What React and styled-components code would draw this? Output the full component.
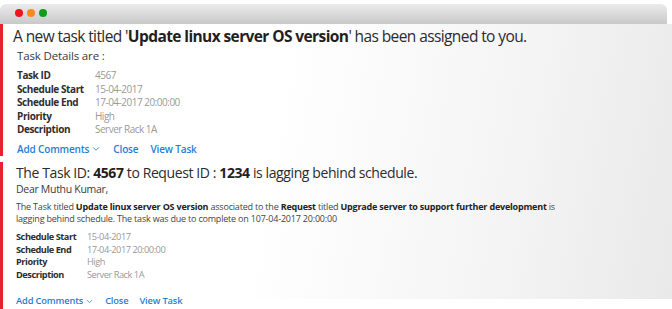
import React from "react";
import styled, { createGlobalStyle } from "styled-components";
import { ChevronDown } from "lucide-react";

const Global = createGlobalStyle`
  html, body { margin: 0; padding: 0; background: #fff; }
  body { font-family: "Open Sans", "Noto Sans", sans-serif; }
  * { box-sizing: border-box; }
`;

const Window = styled.div`
  width: 672px;
  padding-top: 4px;
  background: #fff;
`;

const TitleBar = styled.div`
  height: 20px;
  width: 667px;
  border-radius: 6px 6px 0 0;
  background: linear-gradient(#ebebeb, #c9c9c9);
  display: flex;
  align-items: center;
  gap: 4px;
  padding-left: 15px;
  padding-bottom: 2px;
`;

const Dot = styled.span`
  width: 8px;
  height: 8px;
  border-radius: 50%;
  background: ${(p) => p.$color};
`;

const Content = styled.div`
  background: linear-gradient(100deg, #ffffff 40%, #f4f4f4 75%, #e9e9e9 100%) no-repeat;
  background-size: 100% 275px;
  display: flex;
  flex-direction: column;
`;

const Card = styled.section`
  flex-shrink: 0;
  border-left: 3px solid #e8212e;
  padding: ${(p) => p.$pad};
  margin-top: ${(p) => p.$mt || "0px"};
  display: flex;
  flex-direction: column;
  color: #333;
`;

const Title = styled.h2`
  margin: 0;
  font-weight: 400;
  font-size: ${(p) => p.$fs};
  letter-spacing: ${(p) => p.$ls};
  line-height: ${(p) => p.$lh || "20px"};
  color: #2b2b2b;
  white-space: nowrap;
  b { font-weight: 700; color: #1f1f1f; }
`;

const SubTitle = styled.div`
  font-size: ${(p) => p.$fs || "11.5px"};
  letter-spacing: ${(p) => p.$ls || "-0.15px"};
  line-height: ${(p) => p.$lh || "16px"};
  margin-top: ${(p) => p.$mt || "0px"};
  padding-left: ${(p) => p.$indent || "0px"};
  color: #3a3a3a;
  white-space: nowrap;
`;

const Para = styled.p`
  margin: 4.5px 0 0;
  font-size: 9px;
  letter-spacing: -0.2px;
  line-height: 12.3px;
  color: #444;
  white-space: nowrap;
  b { font-weight: 700; color: #222; }
`;

const Details = styled.div`
  display: grid;
  grid-template-columns: ${(p) => p.$labelW} auto;
  justify-content: start;
  margin-top: ${(p) => p.$mt};
  line-height: ${(p) => p.$lh};
  padding-left: ${(p) => p.$indent || "0px"};
  white-space: nowrap;
`;

const Label = styled.span`
  font-weight: 700;
  font-size: ${(p) => p.$fs};
  letter-spacing: ${(p) => p.$ls};
  color: #2e2e2e;
`;

const Value = styled.span`
  color: #9a9a9a;
  font-size: ${(p) => p.$fs};
  letter-spacing: -0.5px;
`;

const Actions = styled.div`
  display: flex;
  align-items: center;
  margin-top: ${(p) => p.$mt};
  padding-left: ${(p) => p.$indent || "0px"};
  gap: ${(p) => p.$gap};
  font-size: ${(p) => p.$fs};
  letter-spacing: -0.15px;
  line-height: 14px;
  white-space: nowrap;
`;

const Link = styled.a`
  color: #1f7ed6;
  font-weight: 600;
  text-decoration: none;
  display: inline-flex;
  align-items: center;
  gap: 2px;
  cursor: pointer;
`;

const rows1 = [
  ["Task ID", "4567"],
  ["Schedule Start", "15-04-2017"],
  ["Schedule End", "17-04-2017 20:00:00"],
  ["Priority", "High"],
  ["Description", "Server Rack 1A"],
];

const rows2 = rows1.slice(1);

function DetailRows({ rows, labelFs, labelLs, valueFs }) {
  return rows.map(([l, v]) => (
    <React.Fragment key={l}>
      <Label $fs={labelFs} $ls={labelLs}>{l}</Label>
      <Value $fs={valueFs}>{v}</Value>
    </React.Fragment>
  ));
}

export default function App() {
  return (
    <>
      <Global />
      <Window>
        <TitleBar>
          <Dot $color="#f2141c" />
          <Dot $color="#f7891f" />
          <Dot $color="#0f9d1c" />
        </TitleBar>
        <Content>
          <Card $pad="2px 0 0 10px">
            <Title $fs="15.5px" $ls="-0.6px">
              A new task titled '<b>Update linux server OS version</b>' has been assigned to you.
            </Title>
            <SubTitle $mt="2px" $indent="4px">Task Details are :</SubTitle>
            <Details $labelW="78px" $mt="5px" $lh="13.5px" $indent="4px">
              <DetailRows rows={rows1} labelFs="10px" labelLs="-0.4px" valueFs="10px" />
            </Details>
            <Actions $mt="5px" $gap="12px" $fs="10px" $indent="4px">
              <Link>
                Add Comments <ChevronDown size={10} strokeWidth={2} />
              </Link>
              <Link>Close</Link>
              <Link>View Task</Link>
            </Actions>
          </Card>
          <Card $pad="1px 0 1px 13px" $mt="6px">
            <Title $fs="14px" $ls="-0.4px" $lh="19px">
              The Task ID: <b>4567</b> to Request ID : <b>1234</b> is lagging behind schedule.
            </Title>
            <SubTitle $lh="15px" $fs="10.5px" $ls="-0.3px">Dear Muthu Kumar,</SubTitle>
            <Para>
              The Task titled <b>Update linux server OS version</b> associated to the <b>Request</b> titled{" "}
              <b>Upgrade server to support further development</b> is
              <br />
              lagging behind schedule. The task was due to complete on 107-04-2017 20:00:00
            </Para>
            <Details $labelW="71px" $mt="5.5px" $lh="12.5px">
              <DetailRows rows={rows2} labelFs="9.2px" labelLs="-0.45px" valueFs="9.3px" />
            </Details>
            <Actions $mt="13px" $gap="11px" $fs="9.3px">
              <Link>
                Add Comments <ChevronDown size={9} strokeWidth={2} />
              </Link>
              <Link>Close</Link>
              <Link>View Task</Link>
            </Actions>
          </Card>
        </Content>
      </Window>
    </>
  );
}
